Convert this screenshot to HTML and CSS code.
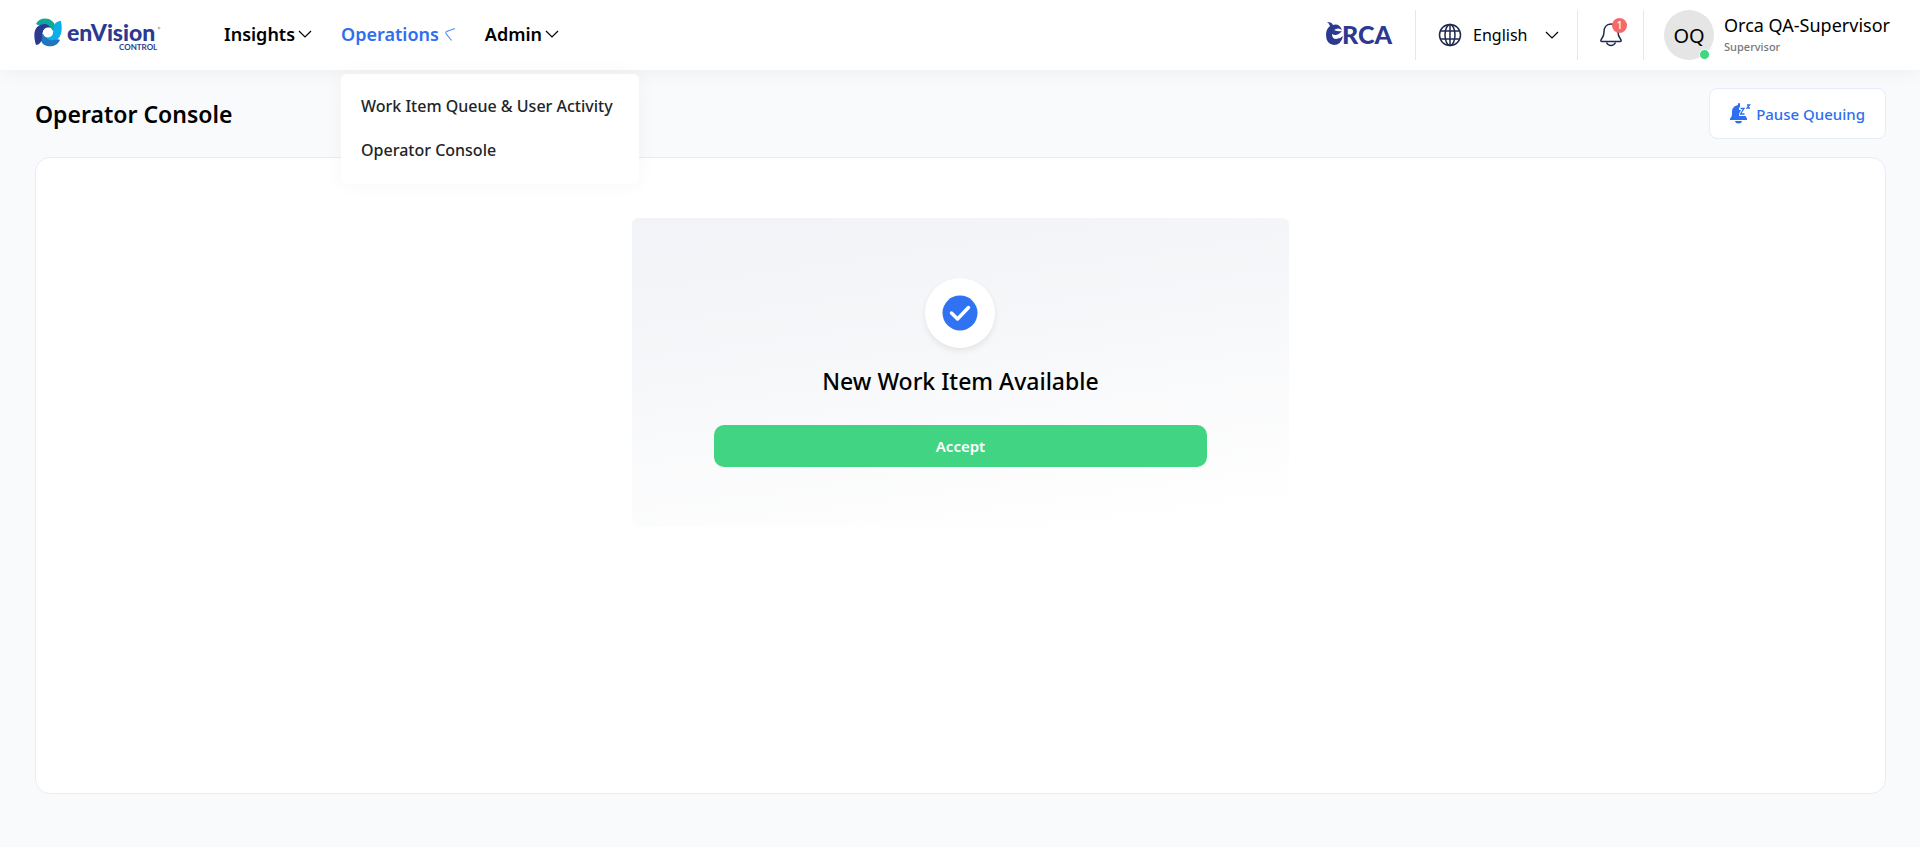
FILE: index.html
```html
<!DOCTYPE html>
<html lang="en">
<head>
<meta charset="utf-8">
<title>Operator Console</title>
<link rel="stylesheet" href="styles.css">
</head>
<body>
<header class="header">
  <a class="logo" href="#">
    <svg width="130" height="36" viewBox="0 0 130 36">
      <path d="M2 7C5 1 13 0 18 4C22 7 22 11 19 15C17 9 12 7 7 8C5 8 3 8 2 7Z" fill="#0ca89a"/>
      <path d="M27 4C29 14 27 22 20 24C15 25 12 23 10 20C17 20 20 16 20 11C20 6 23 4 27 4Z" fill="#0aaeea"/>
      <path d="M26 23C23 30 14 31 9 27C6 24 6 20 9 16C11 21 15 24 20 23C23 22 25 22 26 23Z" fill="#2076bd"/>
      <path d="M2 28C-1 18 0 11 6 8C11 6 14 7 17 11C10 10 8 15 8 20C8 25 5 28 2 28Z" fill="#2b3990"/>
      <circle cx="14" cy="15.500" r="5" fill="#fff"/>
      <text class="brand-name" x="33" y="24">enVision</text>
      <text class="brand-sub" x="85" y="33">CONTROL</text>
      <circle cx="125" cy="11" r="1" fill="none" stroke="#7b84b8" stroke-width=".6"/>
    </svg>
  </a>
  <nav class="nav">
    <div class="nav-item"><button class="nav-button">Insights
      <svg width="14" height="14" viewBox="0 0 14 14"><path d="M1 4l6 6 6-6"/></svg></button></div>
    <div class="nav-item"><button class="nav-button nav-active" aria-expanded="true">Operations
      <svg class="turning" width="14" height="16" viewBox="0 0 14 16"><path d="M13 2.500L4.500 5.500Q3.500 6 4 7.500L9.500 14.500"/></svg></button>
      <div class="menu">
        <a href="#">Work Item Queue &amp; User Activity</a>
        <a href="#">Operator Console</a>
      </div>
    </div>
    <div class="nav-item"><button class="nav-button">Admin
      <svg width="14" height="14" viewBox="0 0 14 14"><path d="M1 4l6 6 6-6"/></svg></button></div>
  </nav>
  <div class="tools">
    <div class="client">
      <svg width="70" height="36" viewBox="0 0 70 36">
        <path d="M2 5Q7 5 8 8Q14 6 17 13Q13 10 9 13Q13 15 17 14Q12 20 7 17Q7 22 11 22Q15 22 18 19Q16 28 9 28Q1 27 1 18Q1 12 5 9Q4 6 2 5Z" fill="#2b3990"/>
        <text class="client-name" x="17" y="27">RCA</text>
      </svg>
    </div>
    <div class="language">
      <svg width="24" height="24" viewBox="0 0 24 24" fill="none" stroke="#1f2a4d" stroke-width="1.500"><circle cx="12" cy="12" r="10.500"/><ellipse cx="12" cy="12" rx="5" ry="10.500"/><path d="M12 1.500v21M2.500 8h19M2.500 16h19"/></svg>
      <select class="language-select" aria-label="Language"><option>English</option></select>
      <svg class="chevron" width="14" height="14" viewBox="0 0 14 14"><path d="M1 4l6 6 6-6"/></svg>
    </div>
    <button class="alerts" aria-label="Notifications">
      <svg width="22" height="24" viewBox="0 0 22 24" fill="none" stroke="#1f2a4d" stroke-width="1.500" stroke-linejoin="round"><path d="M11 1C6 1 4 5 4 9C4 13 3 14 1.500 16Q0 18.500 2 18.500H20Q22 18.500 20.500 16C19 14 18 13 18 9C18 5 16 1 11 1Z"/><path d="M6.500 19.500Q8 22.500 11 22.500T15.500 19.500"/></svg>
      <span class="badge">1</span>
    </button>
    <div class="user">
      <div class="avatar">OQ<span class="status"></span></div>
      <div><div class="user-name">Orca QA-Supervisor</div><div class="user-role">Supervisor</div></div>
    </div>
  </div>
</header>
<main class="page">
  <div class="page-head">
    <h1>Operator Console</h1>
    <button class="pause">
      <svg width="21" height="21" viewBox="0 0 21 21"><path fill="#2d6ff0" d="M8 1a1 1 0 0 1 2 0v3L9 5v2h2L9 11v2h6.500L17 15.500V17H0V15.500C2 14 2 12 2 9C2 5 4 3 8 2ZM5 18h7Q11.500 20.500 8.500 20.500T5 18Z"/><path fill="none" stroke="#2d6ff0" stroke-width="1.300" d="M10.500 5.500H14L10.500 11H14.500M17 2H19.500L17 5H20"/></svg>
      Pause Queuing
    </button>
  </div>
  <section class="panel">
    <div class="card">
      <div class="check"><svg width="36" height="36" viewBox="0 0 36 36"><circle cx="18" cy="18" r="17.500" fill="#2f73f2"/><path d="M9.500 18l6 6L26.500 12.500" fill="none" stroke="#fff" stroke-width="3.500" stroke-linecap="round" stroke-linejoin="round"/></svg></div>
      <h2>New Work Item Available</h2>
      <button class="accept">Accept</button>
    </div>
  </section>
</main>
</body>
</html>
```
FILE: styles.css
```css
* { box-sizing: border-box; }
body {
  margin: 0;
  min-height: 100vh;
  display: flex;
  flex-direction: column;
  background: #f9fafc;
  color: #000;
  font-family: "Noto Sans", "Open Sans", sans-serif;
}
button, select { font: inherit; color: inherit; border: 0; background: none; padding: 0; margin: 0; cursor: pointer; }
a { color: inherit; text-decoration: none; }
svg { display: block; flex: none; }

.header {
  position: relative;
  z-index: 2;
  display: flex;
  align-items: center;
  height: 70px;
  padding: 0 30px 0 34px;
  background: #fff;
  box-shadow: 0 0 20px rgba(0, 0, 0, .06);
}
.logo { margin-right: 60px; }
.brand-name { font: 900 23px Lato, sans-serif; fill: #2b3990; }
.brand-sub { font: 700 8px Lato, sans-serif; fill: #2b3990; }
.nav { display: flex; gap: 29px; }
.nav-item { position: relative; }
.nav-button {
  display: flex;
  align-items: center;
  gap: 3px;
  height: 70px;
  padding-bottom: 2px;
  font-size: 18px;
  font-weight: 600;
}
.nav-button path, .chevron path { fill: none; stroke: currentColor; stroke-width: 1.2; }
.nav-active { color: #2d6ff0; }
.turning { opacity: .8; }
.menu {
  position: absolute;
  top: 74px;
  left: 0;
  display: flex;
  flex-direction: column;
  gap: 20px;
  min-width: 298px;
  padding: 20px 20px 22px;
  background: #fff;
  border-radius: 6px;
  box-shadow: 0 0 20px rgba(0, 0, 0, .04);
  color: #212529;
  font-size: 16px;
  font-weight: 500;
  line-height: 24px;
  white-space: nowrap;
}

.tools { display: flex; align-items: center; margin-left: auto; }
.client { padding-right: 20px; }
.client-name { font: 900 25px Lato, sans-serif; fill: #2b3990; }
.language, .alerts, .user { display: flex; align-items: center; height: 50px; border-left: 1px solid #e6e6f2; }
.language { padding: 0 18px 0 22px; }
.language-select { appearance: none; width: 72px; margin-left: 11px; font-size: 16px; outline: 0; }
.alerts { position: relative; padding: 0 21px 0 22px; }
.badge {
  position: absolute;
  top: 8px;
  right: 16px;
  width: 15px;
  height: 15px;
  border-radius: 50%;
  background: #f46a6a;
  color: #fff;
  font-size: 10px;
  font-weight: 500;
  line-height: 15px;
  text-align: center;
}
.user { gap: 10px; padding-left: 20px; }
.avatar {
  position: relative;
  width: 50px;
  height: 50px;
  border-radius: 50%;
  background: #e5e5e5;
  font-size: 20px;
  line-height: 52px;
  text-align: center;
}
.status {
  position: absolute;
  right: 4px;
  bottom: 0;
  width: 11px;
  height: 11px;
  border: 1px solid #fff;
  border-radius: 50%;
  background: #41d483;
}
.user-name { font-size: 18px; line-height: 24px; }
.user-role { color: #777; font-size: 11px; font-weight: 500; line-height: 20px; }

.page { flex: 1; display: flex; flex-direction: column; padding: 18px 34px 53px 35px; }
.page-head { display: flex; align-items: center; justify-content: space-between; margin-bottom: 18px; }
h1 { margin: 0; font-size: 23px; font-weight: 600; line-height: 32px; }
.pause {
  display: flex;
  align-items: center;
  gap: 5px;
  height: 51px;
  padding: 0 20px;
  border: 1px solid #e9ebfa;
  border-radius: 8px;
  background: #fff;
  color: #2d6ff0;
  font-size: 15px;
  font-weight: 500;
}
.panel {
  flex: 1;
  padding: 60px;
  border: 1px solid #e9ebfa;
  border-radius: 15px;
  background: #fff;
}
.card {
  display: flex;
  flex-direction: column;
  align-items: center;
  width: 38%;
  margin: 0 auto;
  padding: 60px 0;
  border-radius: 6px;
  background: linear-gradient(172deg, #f2f3f8, #f6f7f9 40%, #fff 95%);
}
.check {
  display: grid;
  place-items: center;
  width: 70px;
  height: 70px;
  border-radius: 50%;
  background: #fff;
  box-shadow: 0 3px 6px rgba(0, 0, 0, .08);
}
h2 { margin: 16px 0 27px; font-size: 23px; font-weight: 500; line-height: 34px; }
.accept {
  width: 75%;
  height: 42px;
  border-radius: 10px;
  background: #41d483;
  color: #fff;
  font-size: 15px;
  font-weight: 600;
}
```
